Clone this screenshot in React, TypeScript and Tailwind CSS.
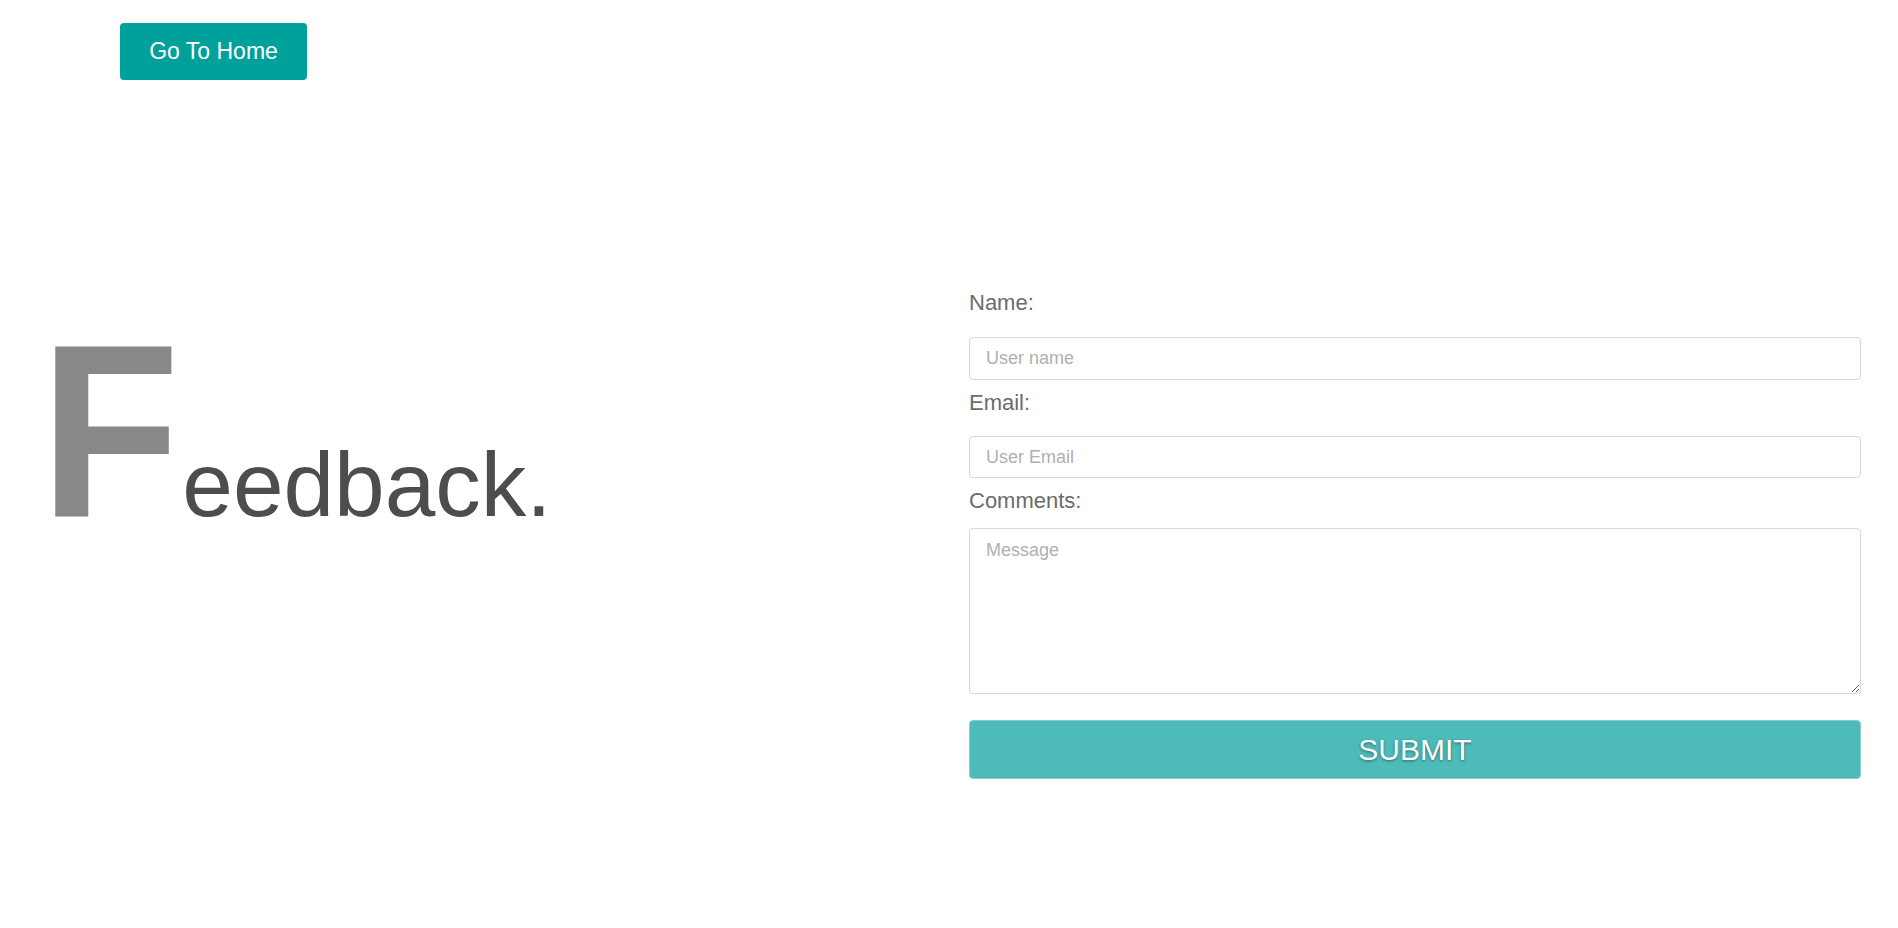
export default function App() {
  return (
    <div className="min-h-screen bg-white font-['Liberation_Sans',Arial,sans-serif]">
      {/* top bar */}
      <div className="pl-[120px] pt-[23px]">
        <button className="h-[57px] w-[187px] rounded-[4px] bg-[#00a19a] text-[23px] text-white">
          Go To Home
        </button>
      </div>

      <div className="mt-[210px] flex">
        {/* heading */}
        <div className="w-[969px] pl-[40px]">
          <h1 className="mt-[18px] flex items-baseline leading-none">
            <span className="inline-block origin-left scale-x-[0.93] text-[246px] font-bold text-[#888888]">F</span>
            <span className="-ml-[8px] text-[91px] text-[#4d4d4d]">eedback.</span>
          </h1>
        </div>

        {/* form */}
        <form className="flex w-[892px] flex-col" onSubmit={(e) => e.preventDefault()}>
          <label className="mb-[22px] block text-[22px] leading-[25px] text-[#6b6b6b]">Name:</label>
          <input
            type="text"
            placeholder="User name"
            className="h-[43px] w-full rounded-[4px] border border-[#d8d8d8] px-4 text-[18px] text-[#555] outline-none placeholder:text-[#b0b0b0]"
          />
          <label className="mb-[21px] mt-[10px] block text-[22px] leading-[25px] text-[#6b6b6b]">Email:</label>
          <input
            type="email"
            placeholder="User Email"
            className="h-[42px] w-full rounded-[4px] border border-[#d8d8d8] px-4 text-[18px] text-[#555] outline-none placeholder:text-[#b0b0b0]"
          />
          <label className="mb-[15px] mt-[10px] block text-[22px] leading-[25px] text-[#6b6b6b]">Comments:</label>
          <textarea
            placeholder="Message"
            className="h-[166px] w-full rounded-[4px] border border-[#d8d8d8] px-4 pt-[8px] text-[18px] text-[#555] outline-none placeholder:text-[#b0b0b0]"
          />
          <button
            type="submit"
            className="mt-[26px] h-[59px] w-full rounded-[4px] border border-[#86cfd6] bg-[#4dbcb8] text-[30px] text-white [text-shadow:0_1px_3px_rgba(0,0,0,0.45)]"
          >
            SUBMIT
          </button>
        </form>
      </div>
    </div>
  );
}
